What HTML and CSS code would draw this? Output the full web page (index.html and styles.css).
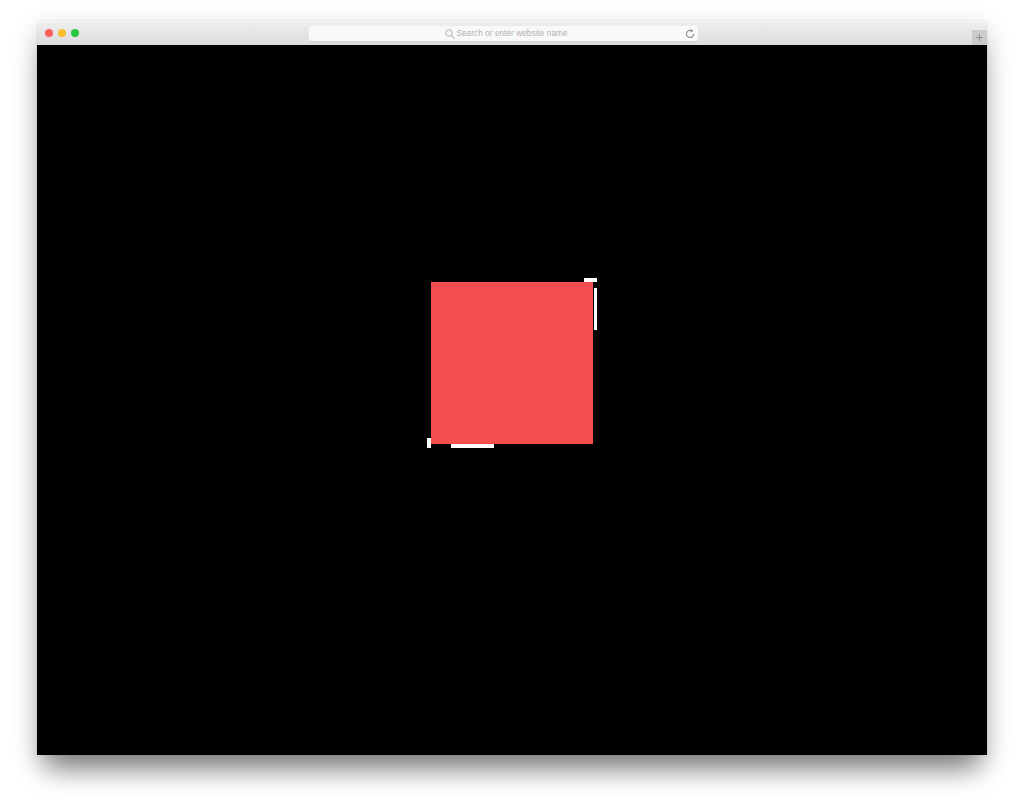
FILE: index.html
```html
<!DOCTYPE html>
<html lang="en">
<head>
<meta charset="utf-8">
<title>Preloader</title>
<link rel="stylesheet" href="styles.css">
</head>
<body>
<div class="window">
  <header class="titlebar">
    <div class="lights">
      <span class="light red"></span>
      <span class="light yellow"></span>
      <span class="light green"></span>
    </div>
    <div class="address">
      <div class="query">
        <svg class="search" viewBox="0 0 10 10" width="10" height="10"><circle cx="4" cy="4" r="3.2" fill="none" stroke="#b0b0b0" stroke-width="1"/><path d="M6.4 6.4L9.6 9.6" stroke="#b0b0b0" stroke-width="1.1"/></svg>
        <span class="placeholder">Search or enter website name</span>
      </div>
      <svg class="reload" viewBox="0 0 10 10" width="10" height="10"><path d="M6.9 1.9A3.6 3.6 0 1 0 8.6 5" fill="none" stroke="#8a8a8a" stroke-width="1.1"/><path d="M5.6 0L8.4 1.9L5.6 3.4Z" fill="#8a8a8a"/></svg>
    </div>
    <div class="newtab"><svg viewBox="0 0 7 7" width="7" height="7"><path d="M3.5 0V7M0 3.5H7" stroke="#8e8e8e" stroke-width="1"/></svg></div>
  </header>
  <main class="content">
    <div class="square">
      <span class="mark mark-tr"></span>
      <span class="mark mark-r"></span>
      <span class="mark mark-bl"></span>
      <span class="mark mark-b"></span>
    </div>
  </main>
</div>
</body>
</html>
```
FILE: styles.css
```css
html, body {
  margin: 0;
  height: 100%;
  background: #fff;
  overflow: hidden;
}
body {
  padding: 21px 37px 0;
  box-sizing: border-box;
  height: 807px;
}
.window {
  width: 950px;
  height: 734px;
  display: flex;
  flex-direction: column;
  border-radius: 4px 4px 0 0;
  box-shadow: 0 0 1px rgba(0, 0, 0, 0.35), 0 24px 26px -10px rgba(0, 0, 0, 0.42), 0 8px 26px rgba(0, 0, 0, 0.2);
}
.titlebar {
  position: relative;
  height: 24px;
  display: flex;
  align-items: center;
  justify-content: center;
  background: linear-gradient(#f0eff0, #dddcdd);
  border-radius: 4px 4px 0 0;
  box-shadow: inset 0 1px 0 #f8f8f8;
}
.lights {
  position: absolute;
  left: 8px;
  top: 8px;
  display: flex;
  gap: 5px;
}
.light {
  width: 8px;
  height: 8px;
  border-radius: 50%;
}
.red { background: #fc615d; }
.yellow { background: #fdbd2f; }
.green { background: #27c840; }
.address {
  position: relative;
  width: 389px;
  height: 15px;
  margin: 1px 18px 0 0;
  display: flex;
  align-items: center;
  justify-content: center;
  background: #f9f9f9;
  border-radius: 2px;
  box-shadow: 0 1px 0 #d2d2d2;
}
.query {
  display: flex;
  align-items: center;
  gap: 1px;
  margin-left: 7px;
}
.placeholder {
  font: 8.2px/15px "Liberation Sans", Arial, sans-serif;
  letter-spacing: 0.07px;
  color: #b0b0b0;
}
.reload {
  position: absolute;
  right: 3px;
  top: 3px;
}
.newtab {
  position: absolute;
  right: 0;
  bottom: 0;
  width: 15px;
  height: 15px;
  display: flex;
  align-items: center;
  justify-content: center;
  background: #cbcbcb;
}
.content {
  flex: 1;
  display: flex;
  justify-content: center;
  align-items: flex-start;
  padding-top: 237px;
  background: #000;
}
.square {
  position: relative;
  width: 162px;
  height: 162px;
  background: #f44e4e;
}
.mark {
  position: absolute;
  background: #fff;
}
.mark-tr { left: 153px; top: -4px; width: 13px; height: 4px; }
.mark-r { left: 163px; top: 6px; width: 3px; height: 42px; }
.mark-bl { left: -4px; top: 156px; width: 4px; height: 10px; }
.mark-b { left: 20px; top: 162px; width: 43px; height: 4px; }
```
